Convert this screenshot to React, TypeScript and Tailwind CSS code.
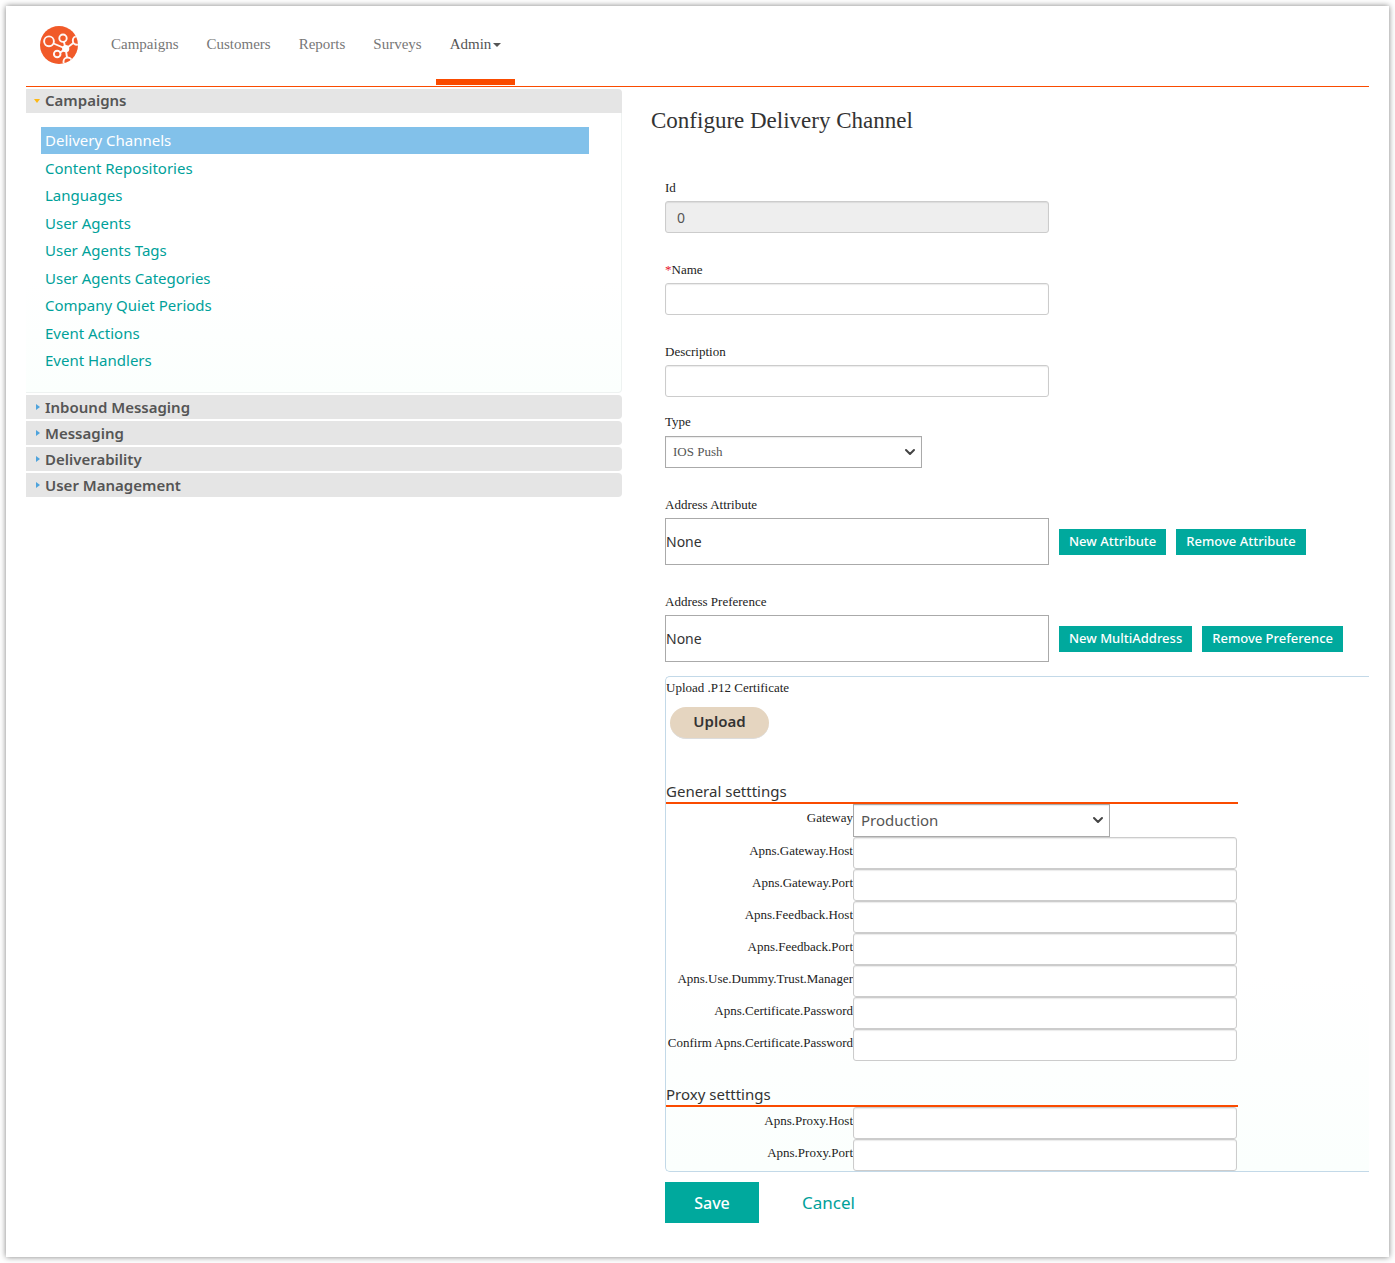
import { useState } from 'react'
import type { ReactNode } from 'react'
import { ChevronDown } from 'lucide-react'

const SERIF = "font-['Liberation_Serif',serif]"
const SANS = "font-['Noto_Sans',sans-serif]"

const navItems = ['Campaigns', 'Customers', 'Reports', 'Surveys']

const campaignLinks = [
  'Delivery Channels',
  'Content Repositories',
  'Languages',
  'User Agents',
  'User Agents Tags',
  'User Agents Categories',
  'Company Quiet Periods',
  'Event Actions',
  'Event Handlers',
]

const closedSections = ['Inbound Messaging', 'Messaging', 'Deliverability', 'User Management']

const generalFields = [
  'Apns.Gateway.Host',
  'Apns.Gateway.Port',
  'Apns.Feedback.Host',
  'Apns.Feedback.Port',
  'Apns.Use.Dummy.Trust.Manager',
  'Apns.Certificate.Password',
  'Confirm Apns.Certificate.Password',
]

const proxyFields = ['Apns.Proxy.Host', 'Apns.Proxy.Port']

const labelClass = `${SERIF} block text-[13px] leading-[18px] text-[#222]`
const inputClass =
  'block h-8 w-[384px] max-w-full rounded-[3px] border border-[#ccc] px-[11px] text-sm text-[#555] shadow-[inset_0_1px_1px_rgba(0,0,0,0.08)] outline-none focus:border-[#66afe9]'

function Logo() {
  return (
    <svg viewBox="0 0 38 38" className="size-[38px]" aria-hidden="true">
      <defs>
        <clipPath id="disc">
          <circle cx="19" cy="19" r="19" />
        </clipPath>
      </defs>
      <g clipPath="url(#disc)">
        <rect width="38" height="38" fill="#f15a29" />
        <g stroke="#fff" strokeOpacity="0.95" strokeWidth="1.9" fill="none">
          <path d="M13.5 17.5 25.7 22.7M23.8 15.6 25.7 22.7M33.4 17 25.7 22.7M20 26.6 25.7 22.7M27 31.5 25.7 22.7" />
          <circle cx="9" cy="15.3" r="4.9" />
          <circle cx="23" cy="12.2" r="3.7" />
          <circle cx="37" cy="14.5" r="4.2" />
          <circle cx="17.2" cy="28" r="3.3" />
          <circle cx="27.7" cy="35.7" r="4.2" />
        </g>
        <circle cx="25.7" cy="22.7" r="3.6" fill="#fff" />
      </g>
    </svg>
  )
}

function Select({ id, value, className }: { id: string; value: string; className: string }) {
  return (
    <div className="relative w-[257px] max-w-full">
      <select
        id={id}
        defaultValue={value}
        className={`block w-full appearance-none border border-[#aaa] bg-white pl-[7px] pr-8 text-[#555] shadow-[inset_0_1px_1px_rgba(0,0,0,0.08)] outline-none ${className}`}
      >
        <option>{value}</option>
      </select>
      <ChevronDown
        size={16}
        strokeWidth={3}
        className="pointer-events-none absolute right-1 top-2 text-[#444]"
      />
    </div>
  )
}

function TextField({ id, label, required }: { id: string; label: string; required?: boolean }) {
  return (
    <div>
      <label htmlFor={id} className={labelClass}>
        {required && <span className="text-[#e8112d]">*</span>}
        {label}
      </label>
      <input id={id} className={`mt-1 bg-white ${inputClass}`} />
    </div>
  )
}

function AddressField({ id, label, actions }: { id: string; label: string; actions: string[] }) {
  return (
    <div>
      <label htmlFor={id} className={labelClass}>
        {label}
      </label>
      <div className="mt-1 flex items-center gap-[10px]">
        <input
          id={id}
          readOnly
          value="None"
          className="h-[47px] w-[384px] min-w-0 border border-[#aaa] bg-white text-sm text-[#333] outline-none"
        />
        {actions.map((a) => (
          <button
            key={a}
            type="button"
            className="h-[26px] shrink-0 bg-[#00a99d] px-[10px] pt-px text-[13px] font-medium text-white"
          >
            {a}
          </button>
        ))}
      </div>
    </div>
  )
}

function SettingsRow({ id, label, children }: { id: string; label: string; children: ReactNode }) {
  return (
    <div className="grid grid-cols-[187px_minmax(0,1fr)]">
      <label htmlFor={id} className={`${labelClass} whitespace-nowrap pt-[5px] text-right`}>
        {label}
      </label>
      {children}
    </div>
  )
}

export default function App() {
  const [active, setActive] = useState('Delivery Channels')

  return (
    <div className={`${SANS} min-h-screen bg-white p-[6px] text-[15px] text-[#333]`}>
      <div className="bg-white px-5 pb-[34px] shadow-[0_0_6px_rgba(0,0,0,0.5)]">
        <header className="flex h-[81px] items-stretch border-b border-[#fa4b00]">
          <a href="#home" aria-label="Home" className="ml-[14px] mr-[19px] mt-5">
            <Logo />
          </a>
          <nav className={`${SERIF} flex text-[15px] leading-5 text-[#777]`}>
            {navItems.map((item) => (
              <a key={item} href="#nav" className="px-[14px] pt-7">
                {item}
              </a>
            ))}
            <a
              href="#admin"
              className="mb-px flex items-start border-b-6 border-[#fa4b00] px-[14px] pt-7 text-[#555]"
            >
              Admin
              <span className="ml-[2px] mt-[9px] border-x-4 border-t-4 border-x-transparent border-t-[#555]" />
            </a>
          </nav>
        </header>

        <div className="grid grid-cols-[596fr_747fr]">
          <aside className="flex flex-col gap-[2px] pt-[2px]">
            <section>
              <button
                type="button"
                aria-expanded="true"
                className="flex h-6 w-full items-center rounded-tr bg-[#e5e5e5] pb-px pl-2 text-left font-semibold text-[#555]"
              >
                <span className="mr-[5px] border-x-3 border-t-4 border-x-transparent border-t-[#fdb813]" />
                Campaigns
              </button>
              <div className="h-[280px] rounded-br border-b border-r border-[#eef2f1] bg-linear-to-b from-white from-60% to-[#fbfffd] pl-[15px] pr-8 pt-[14px]">
                <ul className="grid h-[247px] auto-rows-fr">
                  {campaignLinks.map((item) => (
                    <li key={item} className="grid">
                      <a
                        href="#section"
                        onClick={() => setActive(item)}
                        className={
                          item === active
                            ? 'flex items-center bg-[#82c1ea] pl-1 text-white'
                            : 'flex items-center pl-1 text-[#00a19a]'
                        }
                      >
                        {item}
                      </a>
                    </li>
                  ))}
                </ul>
              </div>
            </section>
            {closedSections.map((s) => (
              <button
                key={s}
                type="button"
                aria-expanded="false"
                className="flex h-6 w-full items-center rounded-r bg-[#e5e5e5] pl-[10px] text-left font-semibold text-[#555]"
              >
                <span className="mr-[5px] border-y-3 border-l-4 border-y-transparent border-l-[#4ea3dc]" />
                {s}
              </button>
            ))}
          </aside>

          <main className="pl-[29px]">
            <h1 className={`${SERIF} pt-5 text-[23px] leading-7`}>Configure Delivery Channel</h1>
            <form className="pl-[14px] pt-11" onSubmit={(e) => e.preventDefault()}>
              <label htmlFor="id" className={labelClass}>
                Id
              </label>
              <input id="id" disabled value="0" className={`mb-7 mt-1 bg-[#eee] ${inputClass}`} />
              <TextField id="name" label="Name" required />
              <div className="pt-7">
                <TextField id="description" label="Description" />
              </div>
              <div className="pb-7 pt-4">
                <label htmlFor="type" className={labelClass}>
                  Type
                </label>
                <div className={`${SERIF} mt-[5px]`}>
                  <Select id="type" value="IOS Push" className="h-8 text-[13px]" />
                </div>
              </div>
              <div className="flex flex-col gap-7">
                <AddressField
                  id="address-attribute"
                  label="Address Attribute"
                  actions={['New Attribute', 'Remove Attribute']}
                />
                <AddressField
                  id="address-preference"
                  label="Address Preference"
                  actions={['New MultiAddress', 'Remove Preference']}
                />
              </div>

              <div className="mt-[14px] rounded-l-[5px] border-y border-l border-[#c3d9e8] bg-linear-to-b from-white from-60% to-[#fbfffd]">
                <label htmlFor="upload" className={`${labelClass} pt-[2px]`}>
                  Upload .P12 Certificate
                </label>
                <button
                  id="upload"
                  type="button"
                  className="ml-1 mt-[10px] block h-8 w-[99px] rounded-full border-b border-[#dcdcdc] bg-[#e5d5c0] pb-[2px] font-semibold"
                >
                  Upload
                </button>

                <div className="mt-[42px] w-[572px] max-w-full">
                  <h2 className="border-b-2 border-[#fa4b00] leading-[21px]">General setttings</h2>
                  <SettingsRow id="gateway" label="Gateway">
                    <Select id="gateway" value="Production" className="h-[33px] text-[15px]" />
                  </SettingsRow>
                  {generalFields.map((f) => (
                    <SettingsRow key={f} id={f} label={f}>
                      <input id={f} className={`bg-white ${inputClass}`} />
                    </SettingsRow>
                  ))}
                  <h2 className="mt-[23px] border-b-2 border-[#fa4b00] leading-[21px]">
                    Proxy setttings
                  </h2>
                  {proxyFields.map((f) => (
                    <SettingsRow key={f} id={f} label={f}>
                      <input id={f} className={`bg-white ${inputClass}`} />
                    </SettingsRow>
                  ))}
                </div>
              </div>

              <div className="mt-[10px] flex items-center">
                <button type="submit" className="h-[41px] w-[94px] bg-[#00a99d] text-base font-medium text-white">
                  Save
                </button>
                <a href="#cancel" className="ml-[43px] text-[17px] text-[#00a19a]">
                  Cancel
                </a>
              </div>
            </form>
          </main>
        </div>
      </div>
    </div>
  )
}
